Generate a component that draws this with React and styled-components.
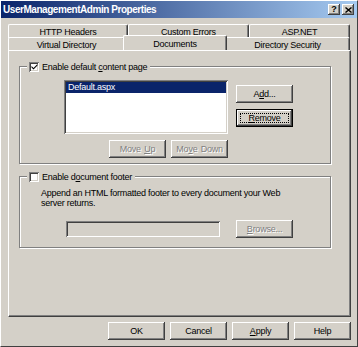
import React from 'react'
import styled, { createGlobalStyle } from 'styled-components'

const GlobalStyle = createGlobalStyle`
  html, body {
    margin: 0;
    padding: 0;
    background: #d4d0c8;
  }
  * {
    box-sizing: border-box;
  }
  body {
    font-family: "Liberation Sans", Arial, sans-serif;
    font-size: 9px;
    letter-spacing: -0.25px;
    color: #000;
  }
`

const raised = `
  box-shadow: inset -1px -1px #404040, inset 1px 1px #fff, inset -2px -2px #808080, inset 2px 2px #d4d0c8;
`

const sunken = `
  box-shadow: inset 1px 1px #808080, inset -1px -1px #fff, inset 2px 2px #404040, inset -2px -2px #d4d0c8;
`

const Window = styled.div`
  width: 358px;
  height: 347px;
  background: #d4d0c8;
  border-style: solid;
  border-width: 1px;
  border-color: #fff #404040 #404040 #fff;
  display: flex;
  flex-direction: column;
`

const TitleBar = styled.div`
  height: 17px;
  display: flex;
  align-items: center;
  padding: 0 3px 0 2px;
  background: linear-gradient(to right, #0a246a, #a6caf0);
  color: #fff;
  font-weight: bold;
  font-size: 10px;
  letter-spacing: -0.45px;
`

const Title = styled.span`
  flex: 1;
  white-space: nowrap;
`

const TitleButton = styled.div`
  width: 12px;
  height: 11px;
  margin-left: ${p => p.$gap || 0}px;
  background: #d4d0c8;
  ${raised}
  display: flex;
  align-items: center;
  justify-content: center;
  color: #000;
  letter-spacing: 0;
`

const Body = styled.div`
  flex: 1;
  padding: 6px 6px 0 7px;
  display: flex;
  flex-direction: column;
`

const TabRow = styled.div`
  display: flex;
  height: 13px;
  position: relative;
  z-index: ${p => p.$front ? 2 : 1};
`

const Tab = styled.div`
  width: ${p => p.$w}px;
  height: ${p => p.$active ? 16 : 14}px;
  margin: ${p => p.$active ? '-2px -2px 0 -2px' : '0'};
  position: relative;
  z-index: ${p => p.$active ? 3 : 1};
  background: #d4d0c8;
  border-top: 1px solid #fff;
  border-left: 1px solid #fff;
  border-right: 1px solid #404040;
  border-top-left-radius: 2px;
  border-top-right-radius: 2px;
  box-shadow: inset -1px 0 #808080;
  display: flex;
  align-items: center;
  justify-content: center;
  padding-top: ${p => p.$active ? 0 : 1}px;
  white-space: nowrap;
`

const Panel = styled.div`
  height: 267px;
  border-style: solid;
  border-width: 1px;
  border-color: #fff #404040 #404040 #fff;
  box-shadow: inset -1px -1px #808080;
  padding: 10px 0 0 10px;
  display: flex;
  flex-direction: column;
  position: relative;
  z-index: 2;
`

const Group = styled.fieldset`
  width: 312px;
  margin: ${p => p.$top || 0}px 0 0 0;
  padding: 0;
  border: 1px solid #808080;
  box-shadow: inset 1px 1px #fff, 1px 1px #fff;
`

const Legend = styled.legend`
  margin-left: 7px;
  padding: 0 3px 0 2px;
  display: flex;
  align-items: center;
  gap: 3px;
  height: 11px;
  background: #d4d0c8;
`

const Check = styled.span`
  width: 10px;
  height: 10px;
  background: #fff;
  ${sunken}
  display: flex;
  align-items: center;
  justify-content: center;
`

const GroupBody = styled.div`
  padding: ${p => p.$pad};
`

const ListGrid = styled.div`
  display: grid;
  grid-template-columns: 164px 57px;
  column-gap: 8px;
  row-gap: 6px;
`

const ListBox = styled.div`
  height: 54px;
  background: #fff;
  ${sunken}
  padding: 2px;
`

const ListItem = styled.div`
  height: 11px;
  line-height: 11px;
  padding-left: 2px;
  background: ${p => p.$selected ? '#0a246a' : 'transparent'};
  color: ${p => p.$selected ? '#fff' : '#000'};
`

const ButtonColumn = styled.div`
  display: flex;
  flex-direction: column;
  gap: 6px;
  padding-top: 5px;
`

const ButtonRow = styled.div`
  display: flex;
  justify-content: flex-end;
  gap: 5px;
`

const Button = styled.div`
  width: ${p => p.$w || 57}px;
  height: 18px;
  background: #d4d0c8;
  display: flex;
  align-items: center;
  justify-content: center;
  position: relative;
  white-space: pre;
  word-spacing: 1px;
  color: ${p => p.$disabled ? '#808080' : '#000'};
  text-shadow: ${p => p.$disabled ? '1px 1px #fff' : 'none'};
  ${p => p.$default
    ? `border: 1px solid #000; box-shadow: inset -1px -1px #404040, inset 1px 1px #fff, inset -2px -2px #808080;`
    : raised}
`

const Focus = styled.span`
  position: absolute;
  inset: 3px;
  border: 1px dotted #000;
`

const Description = styled.p`
  margin: 0;
  line-height: 10px;
  white-space: nowrap;
`

const FieldRow = styled.div`
  display: flex;
  align-items: center;
  gap: 16px;
  margin-top: 12px;
  padding-left: 25px;
`

const TextField = styled.div`
  width: 154px;
  height: 16px;
  background: #d4d0c8;
  ${sunken}
`

const Footer = styled.div`
  display: flex;
  justify-content: flex-end;
  gap: 5px;
  margin-top: 5px;
`

const Tick = () => (
  <svg width="7" height="7" viewBox="0 0 7 7">
    <path d="M0.5 3 L2.5 5 L6.5 1 L6.5 2.5 L2.5 6.5 L0.5 4.5 Z" fill="#000" />
  </svg>
)

const CloseGlyph = () => (
  <svg width="7" height="6" viewBox="0 0 7 6">
    <path d="M0.5 0.5 L6.5 5.5 M6.5 0.5 L0.5 5.5" stroke="#000" strokeWidth="1.4" />
  </svg>
)

const HelpGlyph = styled.span`
  font-weight: bold;
  font-size: 9px;
  line-height: 9px;
`

export default function App() {
  return (
    <>
      <GlobalStyle />
      <Window>
        <TitleBar>
          <Title>UserManagementAdmin Properties</Title>
          <TitleButton><HelpGlyph>?</HelpGlyph></TitleButton>
          <TitleButton $gap={2}><CloseGlyph /></TitleButton>
        </TitleBar>
        <Body>
          <TabRow>
            <Tab $w={120}>HTTP Headers</Tab>
            <Tab $w={121}>Custom Errors</Tab>
            <Tab $w={101}>ASP.NET</Tab>
          </TabRow>
          <TabRow $front>
            <Tab $w={117}>Virtual Directory</Tab>
            <Tab $w={104} $active>Documents</Tab>
            <Tab $w={125}>Directory Security</Tab>
          </TabRow>
          <Panel>
            <Group>
              <Legend>
                <Check><Tick /></Check>
                <span>Enable default <u>c</u>ontent page</span>
              </Legend>
              <GroupBody $pad="8px 0 5px 44px">
                <ListGrid>
                  <ListBox>
                    <ListItem $selected>Default.aspx</ListItem>
                  </ListBox>
                  <ButtonColumn>
                    <Button>A<u>d</u>d...</Button>
                    <Button $default><Focus /><u>R</u>emove</Button>
                  </ButtonColumn>
                  <ButtonRow>
                    <Button $disabled>{'Move '}<u>U</u>p</Button>
                    <Button $disabled>Mo<u>v</u>e Down</Button>
                  </ButtonRow>
                </ListGrid>
              </GroupBody>
            </Group>
            <Group $top={7}>
              <Legend>
                <Check />
                <span>Enable d<u>o</u>cument footer</span>
              </Legend>
              <GroupBody $pad="6px 0 9px 21px">
                <Description>
                  Append an HTML formatted footer to every document your Web
                  <br />
                  server returns.
                </Description>
                <FieldRow>
                  <TextField />
                  <Button $disabled><u>B</u>rowse...</Button>
                </FieldRow>
              </GroupBody>
            </Group>
          </Panel>
          <Footer>
            <Button>OK</Button>
            <Button>Cancel</Button>
            <Button><u>A</u>pply</Button>
            <Button>Help</Button>
          </Footer>
        </Body>
      </Window>
    </>
  )
}
